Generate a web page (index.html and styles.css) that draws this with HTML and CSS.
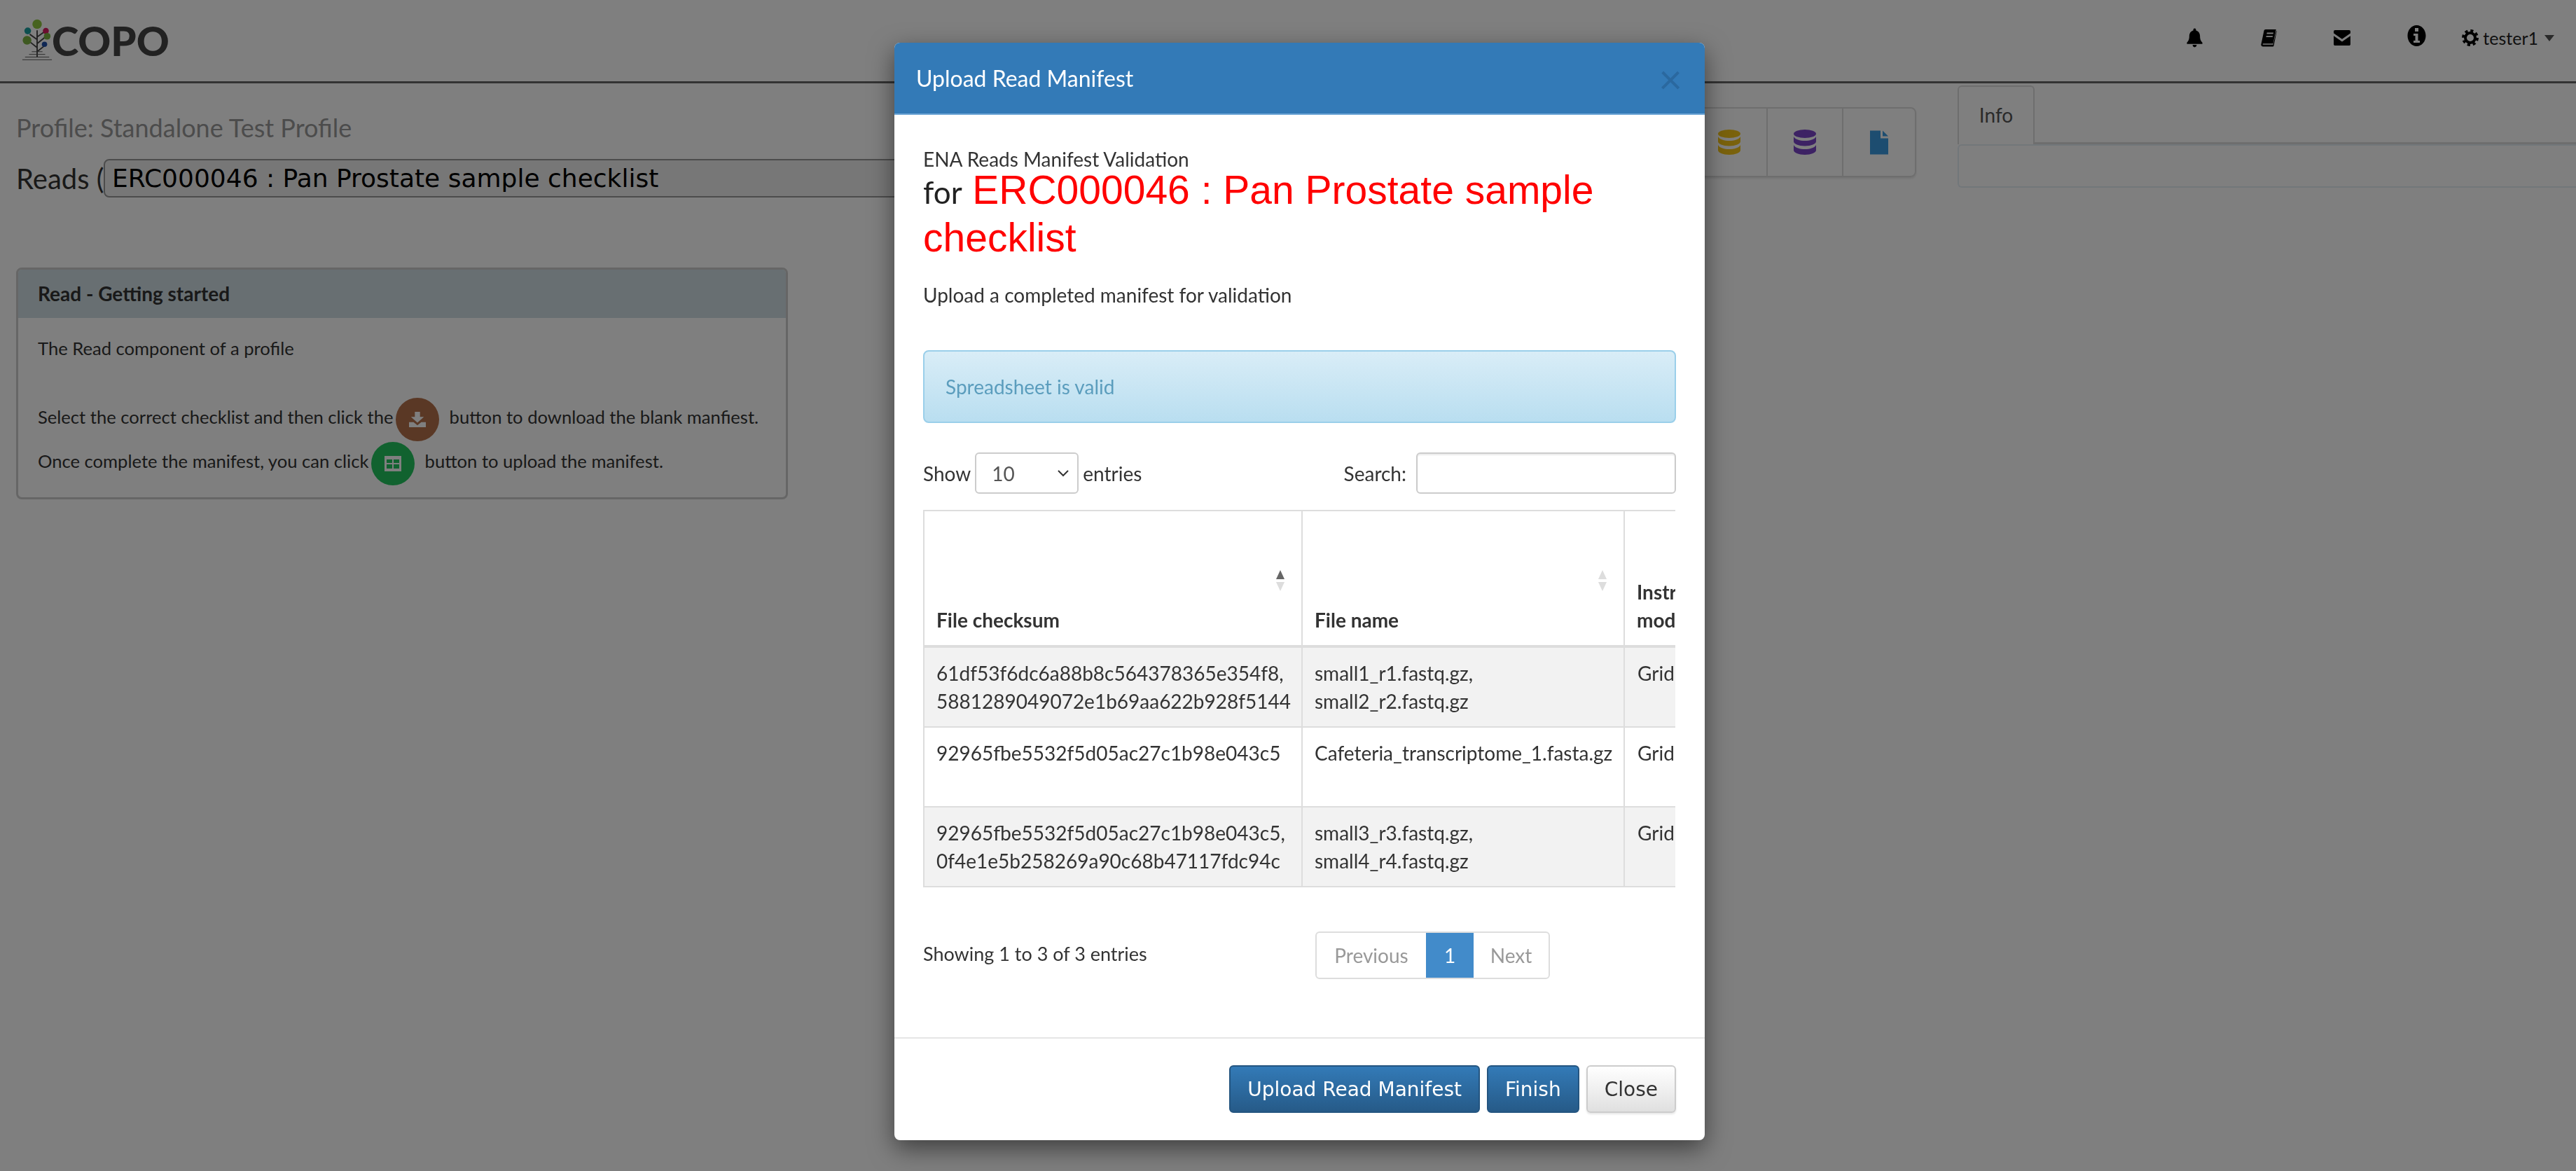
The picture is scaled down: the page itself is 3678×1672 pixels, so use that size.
FILE: index.html
```html
<!DOCTYPE html>
<html lang="en">
<head>
    <meta charset="UTF-8">
    <meta name="viewport" content="width=device-width, initial-scale=1.0">
    <title>COPO - Reads</title>
    <link rel="stylesheet" href="styles.css">
</head>
<body>
    <!-- top bar -->
    <header class="navbar">
        <div class="brand">
            <svg class="brand-tree" viewBox="0 0 48 62" aria-hidden="true">
                <path d="M24 16V56M24 30L13 22M24 26L34 19M24 42L14 34M24 36L35 27M24 48L34 40" stroke="#444" stroke-width="2" fill="none"/>
                <path d="M2 60H46M6 56H42M12 52H36M16 48H32" stroke="#555" stroke-width="1"/>
                <circle cx="24" cy="7" r="7" fill="#8ec63f"/>
                <circle cx="10" cy="17" r="5" fill="#1b9e9e"/>
                <circle cx="37" cy="17" r="4.5" fill="#d81b60"/>
                <circle cx="9" cy="31" r="6.5" fill="#7cb342"/>
                <circle cx="39" cy="25" r="5" fill="#7cb342"/>
                <circle cx="35" cy="37" r="4" fill="#1e4fa8"/>
            </svg>
            <span class="brand-name">COPO</span>
        </div>
        <nav class="nav-icons">
            <svg class="nav-icon icon-bell" viewBox="0 0 24 28"><path d="M12 0c1.200 0 2 .9 2 2v1c4 1 6 4.500 6 9 0 5 1.500 7 3.500 9v2H.5v-2c2-2 3.500-4 3.500-9 0-4.500 2-8 6-9V2c0-1.100.8-2 2-2zM9 24.500h6c0 2-1.300 3.500-3 3.500s-3-1.500-3-3.500z"/></svg>
            <svg class="nav-icon icon-book" viewBox="0 0 24 28"><path fill-rule="evenodd" d="M7 1h16l-4.500 22H3.500C2 23 1.800 24.500 3.500 24.500h15L23.500 3l.5 1-4.500 22.500c-.2.700-.7 1-1.400 1H3C.8 27.500-.5 25.500.2 23.500L4.500 3C4.800 1.800 5.700 1 7 1zM9 6l-.4 2h10l.4-2zM8 11l-.4 2h10l.4-2z"/></svg>
            <svg class="nav-icon icon-mail" viewBox="0 0 26 24"><path d="M2 0h22c1.100 0 2 .9 2 2v3L13 14 0 5V2C0 .9.900 0 2 0zM0 9l13 9 13-9v13c0 1.100-.9 2-2 2H2c-1.100 0-2-.9-2-2z"/></svg>
            <svg class="nav-icon icon-info" viewBox="0 0 26 30"><path fill-rule="evenodd" d="M13 0c7.200 0 13 6.700 13 15s-5.800 15-13 15S0 23.300 0 15 5.800 0 13 0zM10.500 4v5h5V4zM8.500 12v3h2.500v7H8.500v3h9v-3H15V12z"/></svg>
            <span class="user">
                <svg class="gear" viewBox="0 0 24 24"><circle cx="12" cy="12" r="7" fill="none" stroke="#000" stroke-width="4"/><circle cx="12" cy="12" r="10" fill="none" stroke="#000" stroke-width="4" stroke-dasharray="4 3.850"/></svg>
                <span>tester1</span>
                <span class="caret"></span>
            </span>
        </nav>
    </header>

    <main class="page">
        <section class="content">
            <div class="content-top">
                <div class="titles">
                    <h4 class="profile-title">Profile: Standalone Test Profile</h4>
                    <div class="reads-row">
                        <span>Reads (</span>
                        <select class="checklist">
                            <option>ERC000046 : Pan Prostate sample checklist</option>
                        </select>
                    </div>
                </div>
                <div class="toolbar">
                    <div class="tool">
                        <svg class="db-icon db-gold" viewBox="0 0 32 36"><use href="#db"/></svg>
                    </div>
                    <div class="tool">
                        <svg class="db-icon db-purple" viewBox="0 0 32 36"><use href="#db"/></svg>
                    </div>
                    <div class="tool">
                        <svg class="file-icon" viewBox="0 0 26 34"><path d="M0 0h15v11h11v23H0zM18 0l8 8h-8z"/></svg>
                    </div>
                </div>
            </div>

            <div class="panel">
                <div class="panel-heading">Read - Getting started</div>
                <div class="panel-body">
                    <p class="panel-lead">The Read component of a profile</p>
                    <p class="panel-line">Select the correct checklist and then click the
                        <span class="round-btn round-brown">
                            <svg viewBox="0 0 26 24"><path d="M9 0h8v8h6L13 17 3 8h6zM0 16h7l6 5 6-5h7v8H0z" fill="#fff"/></svg>
                        </span>
                        button to download the blank manfiest.</p>
                    <p class="panel-line">Once complete the manifest, you can click
                        <span class="round-btn round-green">
                            <svg viewBox="0 0 24 22"><path fill-rule="evenodd" d="M0 0h24v22H0zM3 5v5h8V5zM13 5v5h8V5zM3 12v6h8v-6zM13 12v6h8v-6z" fill="#fff"/></svg>
                        </span>
                        button to upload the manifest.</p>
                </div>
            </div>
        </section>

        <aside class="side">
            <div class="tabs"><span class="tab">Info</span></div>
            <div class="tab-body"></div>
        </aside>
    </main>

    <svg class="defs" aria-hidden="true">
        <symbol id="db" viewBox="0 0 32 36">
            <ellipse cx="16" cy="6" rx="16" ry="6"/>
            <path d="M0 10c2 4 9 6 16 6s14-2 16-6v7c0 3.500-7 6.500-16 6.500S0 20.500 0 17z"/>
            <path d="M0 22c2 4 9 6 16 6s14-2 16-6v7.500C32 33 25 36 16 36S0 33 0 29.500z"/>
        </symbol>
    </svg>

    <div class="backdrop"></div>

    <!-- upload dialog -->
    <div class="modal">
        <div class="modal-header">
            <span class="modal-title">Upload Read Manifest</span>
            <span class="modal-close">×</span>
        </div>
        <div class="modal-body">
            <div class="validation-sub">ENA Reads Manifest Validation</div>
            <div class="validation-title"><span class="for-word">for</span> <span class="checklist-name">ERC000046 : Pan Prostate sample checklist</span></div>
            <p class="validation-hint">Upload a completed manifest for validation</p>

            <div class="alert">Spreadsheet is valid</div>

            <div class="table-controls">
                <label class="length">Show
                    <select class="length-select"><option>10</option></select>
                    entries</label>
                <label class="search">Search:
                    <input class="search-input" type="text">
                </label>
            </div>

            <div class="table-clip">
                <table class="manifest">
                    <thead>
                        <tr>
                            <th class="col-sum">File checksum<span class="sort sort-asc"></span></th>
                            <th class="col-name">File name<span class="sort"></span></th>
                            <th class="col-inst">Instrument<br>model</th>
                        </tr>
                    </thead>
                    <tbody>
                        <tr>
                            <td>61df53f6dc6a88b8c564378365e354f8,<br>5881289049072e1b69aa622b928f5144</td>
                            <td>small1_r1.fastq.gz,<br>small2_r2.fastq.gz</td>
                            <td>GridION</td>
                        </tr>
                        <tr>
                            <td>92965fbe5532f5d05ac27c1b98e043c5<br>&nbsp;</td>
                            <td>Cafeteria_transcriptome_1.fasta.gz</td>
                            <td>GridION</td>
                        </tr>
                        <tr>
                            <td>92965fbe5532f5d05ac27c1b98e043c5,<br>0f4e1e5b258269a90c68b47117fdc94c</td>
                            <td>small3_r3.fastq.gz,<br>small4_r4.fastq.gz</td>
                            <td>GridION</td>
                        </tr>
                    </tbody>
                </table>
            </div>

            <div class="table-footer">
                <div class="table-info">Showing 1 to 3 of 3 entries</div>
                <div class="pagination">
                    <span class="page-link page-prev">Previous</span>
                    <span class="page-link page-current">1</span>
                    <span class="page-link page-next">Next</span>
                </div>
            </div>
        </div>
        <div class="modal-footer">
            <button class="btn btn-primary">Upload Read Manifest</button>
            <button class="btn btn-primary">Finish</button>
            <button class="btn btn-default">Close</button>
        </div>
    </div>
</body>
</html>
```

FILE: styles.css
```css
* {
    box-sizing: border-box;
}
body {
    margin: 0;
    height: 100vh;
    overflow: hidden;
    background-color: #fff;
    color: #333;
    font-family: Lato, "Noto Sans", sans-serif;
    font-size: 28px;
}
p {
    margin: 0;
}

/* top bar */
.navbar {
    display: flex;
    justify-content: space-between;
    height: 119px;
    padding: 27px 31px 0 30px;
    background-color: #fff;
    border-bottom: 3px solid #666;
}
.brand {
    display: flex;
    align-items: flex-start;
    height: 62px;
}
.brand-tree {
    width: 46px;
    height: 61px;
    flex: none;
}
.brand-name {
    margin: -7px 0 0 -2px;
    color: #444;
    font-size: 58px;
    font-weight: 900;
    line-height: 76px;
}
.nav-icons {
    display: flex;
    align-items: center;
    height: 54px;
}
.nav-icon {
    flex: none;
}
.icon-bell {
    width: 23px;
    height: 28px;
    margin-right: 83px;
}
.icon-book {
    width: 23px;
    height: 26px;
    margin-right: 80px;
}
.icon-mail {
    width: 26px;
    height: 22px;
    margin-right: 80px;
}
.icon-info {
    width: 27px;
    height: 30px;
    margin: -6px 51px 0 0;
}
.user {
    display: flex;
    align-items: center;
    gap: 6px;
    color: #222;
    font-size: 25px;
}
.gear {
    width: 24px;
    height: 24px;
}
.caret {
    margin-left: 3px;
    border-top: 9px solid #555;
    border-left: 7px solid transparent;
    border-right: 7px solid transparent;
}

/* page under the dialog */
.page {
    display: grid;
    grid-template-columns: 2795px 1fr;
}
.content {
    padding-left: 23px;
}
.content-top {
    display: flex;
    justify-content: space-between;
    width: 2713px;
    height: 263px;
}
.titles {
    padding-top: 43px;
}
.profile-title {
    margin: 0;
    color: #999;
    font-size: 36px;
    font-weight: 400;
    line-height: 40px;
}
.reads-row {
    display: flex;
    align-items: center;
    margin-top: 25px;
    font-size: 40px;
}
.reads-row span {
    width: 125px;
    overflow: hidden;
    white-space: nowrap;
}
.checklist {
    width: 1280px;
    height: 55px;
    padding-left: 6px;
    background-color: #efefef;
    border: 2px solid #999;
    border-radius: 8px;
    color: #000;
    font-family: "DejaVu Sans", sans-serif;
    font-size: 36px;
}
.toolbar {
    display: flex;
    height: 100px;
    margin-top: 34px;
    border: 2px solid #ddd;
    border-radius: 0 8px 8px 0;
    box-shadow: 0 2px 3px rgba(0, 0, 0, .1);
}
.tool {
    display: flex;
    align-items: center;
    justify-content: center;
    width: 108px;
    border-right: 2px solid #ddd;
}
.tool:last-child {
    width: 102px;
    border-right: none;
}
.db-icon {
    width: 32px;
    height: 36px;
}
.db-gold {
    fill: #f5c518;
}
.db-purple {
    fill: #7a45c8;
}
.file-icon {
    width: 26px;
    height: 35px;
    fill: #3a9ae0;
}
.defs {
    position: absolute;
    width: 0;
    height: 0;
}

.panel {
    width: 1102px;
    height: 331px;
    border: 3px solid #ccc;
    border-radius: 8px;
    overflow: hidden;
}
.panel-heading {
    height: 69px;
    padding: 0 28px;
    background-color: #d0dfe4;
    color: #333;
    font-weight: 700;
    line-height: 69px;
}
.panel-body {
    padding: 23px 28px 0;
    font-size: 25.6px;
}
.panel-lead {
    margin-bottom: 47px;
    line-height: 40px;
}
.panel-line {
    height: 63px;
    line-height: 63px;
    white-space: nowrap;
}
.round-btn {
    display: inline-flex;
    align-items: center;
    justify-content: center;
    width: 62px;
    height: 62px;
    margin: 0 8px 0 -3px;
    vertical-align: middle;
    border-radius: 50%;
}
.round-btn svg {
    width: 24px;
    height: 24px;
}
.round-brown {
    background-color: #b5714a;
}
.round-green {
    background-color: #22c55e;
}

.side {
    padding-top: 3px;
}
.tabs {
    height: 84px;
    border-bottom: 3px solid #ddd;
}
.tab {
    display: block;
    width: 110px;
    height: 84px;
    background-color: #fff;
    border: 2px solid #ddd;
    border-bottom: none;
    border-radius: 6px 6px 0 0;
    color: #555;
    line-height: 80px;
    text-align: center;
}
.tab-body {
    height: 62px;
    border: 2px solid #e4eef5;
    border-right: none;
    border-radius: 6px 0 0 6px;
}

/* dialog */
.backdrop {
    position: fixed;
    inset: 0;
    background-color: rgba(0, 0, 0, .5);
}
.modal {
    position: absolute;
    top: 61px;
    left: 1277px;
    width: 1157px;
    height: 1567px;
    background-color: #fff;
    border-radius: 8px;
    box-shadow: 0 12px 35px rgba(0, 0, 0, .5);
    overflow: hidden;
}
.modal-header {
    display: flex;
    justify-content: space-between;
    align-items: center;
    height: 103px;
    padding: 0 32px 0 31px;
    background-color: #337ab7;
    border-bottom: 2px solid #6ea6d6;
}
.modal-title {
    color: #fff;
    font-size: 32px;
}
.modal-close {
    color: #2a689f;
    font-size: 58px;
    line-height: 58px;
}
.modal-body {
    height: 1319px;
    padding: 48px 41px 0;
    border-bottom: 2px solid #e5e5e5;
}
.validation-sub {
    line-height: 30px;
}
.validation-title {
    margin-top: -4px;
    color: #222;
    font-size: 57px;
    line-height: 63px;
}
.for-word {
    font-size: 44px;
}
.checklist-name {
    color: #f00;
    font-family: "Liberation Sans", Arial, sans-serif;
}
.validation-hint {
    margin-top: 30px;
    line-height: 40px;
}
.alert {
    height: 104px;
    margin-top: 59px;
    padding-left: 30px;
    background: linear-gradient(#d9edf7, #b9def0);
    border: 2px solid #9acfea;
    border-radius: 8px;
    color: #5b9dbd;
    line-height: 100px;
}
.table-controls {
    display: flex;
    justify-content: space-between;
    height: 59px;
    margin-top: 42px;
}
.length,
.search {
    display: flex;
    align-items: center;
    gap: 6px;
}
.search {
    gap: 14px;
}
.length-select {
    width: 148px;
    height: 59px;
    padding-left: 22px;
    appearance: none;
    background: #fff url("data:image/svg+xml,%3Csvg xmlns='http://www.w3.org/2000/svg' width='16' height='10'%3E%3Cpath d='M1 1l7 7 7-7' fill='none' stroke='%23333' stroke-width='2'/%3E%3C/svg%3E") no-repeat right 12px center;
    border: 2px solid #ccc;
    border-radius: 6px;
    color: #555;
    font-family: Lato, sans-serif;
    font-size: 28px;
}
.search-input {
    width: 371px;
    height: 59px;
    border: 2px solid #ccc;
    border-radius: 6px;
    box-shadow: inset 0 2px 2px rgba(0, 0, 0, .08);
}
.table-clip {
    width: 1074px;
    margin-top: 23px;
    overflow: hidden;
}
.manifest {
    width: 1300px;
    table-layout: fixed;
    border-collapse: collapse;
    line-height: 40px;
}
.manifest th,
.manifest td {
    padding: 16px 17px;
    border: 2px solid #ddd;
    text-align: left;
    vertical-align: top;
}
.manifest th {
    position: relative;
    height: 194px;
    padding-bottom: 16px;
    border-bottom-width: 4px;
    vertical-align: bottom;
}
.col-sum {
    width: 540px;
}
.col-name {
    width: 460px;
}
.col-inst {
    width: 300px;
}
.manifest td:nth-child(3) {
    padding-left: 18px;
}
.manifest tbody tr:nth-child(odd) {
    background-color: #f2f2f2;
}
.sort {
    position: absolute;
    top: 84px;
    right: 24px;
    width: 12px;
    height: 30px;
}
.sort::before,
.sort::after {
    content: "";
    position: absolute;
    left: 0;
    border-left: 6px solid transparent;
    border-right: 6px solid transparent;
}
.sort::before {
    top: 0;
    border-bottom: 13px solid #ddd;
}
.sort::after {
    bottom: 0;
    border-top: 13px solid #ddd;
}
.sort-asc::before {
    border-bottom-color: #666;
}
.table-footer {
    display: flex;
    align-items: center;
    margin-top: 63px;
}
.table-info {
    width: 560px;
    margin-top: -6px;
    font-size: 27px;
}
.pagination {
    display: flex;
    height: 68px;
    border: 2px solid #ddd;
    border-radius: 6px;
    color: #999;
    line-height: 64px;
    overflow: hidden;
}
.page-link {
    text-align: center;
}
.page-prev {
    width: 156px;
}
.page-current {
    width: 68px;
    background-color: #428bca;
    color: #fff;
}
.page-next {
    width: 107px;
}
.modal-footer {
    display: flex;
    justify-content: flex-end;
    gap: 10px;
    padding: 38px 41px 0;
}
.btn {
    height: 68px;
    padding: 0 24px;
    border: 2px solid #245580;
    border-radius: 6px;
    font-family: "DejaVu Sans", sans-serif;
    font-size: 28px;
}
.btn-primary {
    background: linear-gradient(#337ab7, #265a88);
    color: #fff;
}
.btn-default {
    background: linear-gradient(#fff, #e0e0e0);
    border-color: #ccc;
    color: #333;
    box-shadow: 0 2px 3px rgba(0, 0, 0, .1);
}
```
